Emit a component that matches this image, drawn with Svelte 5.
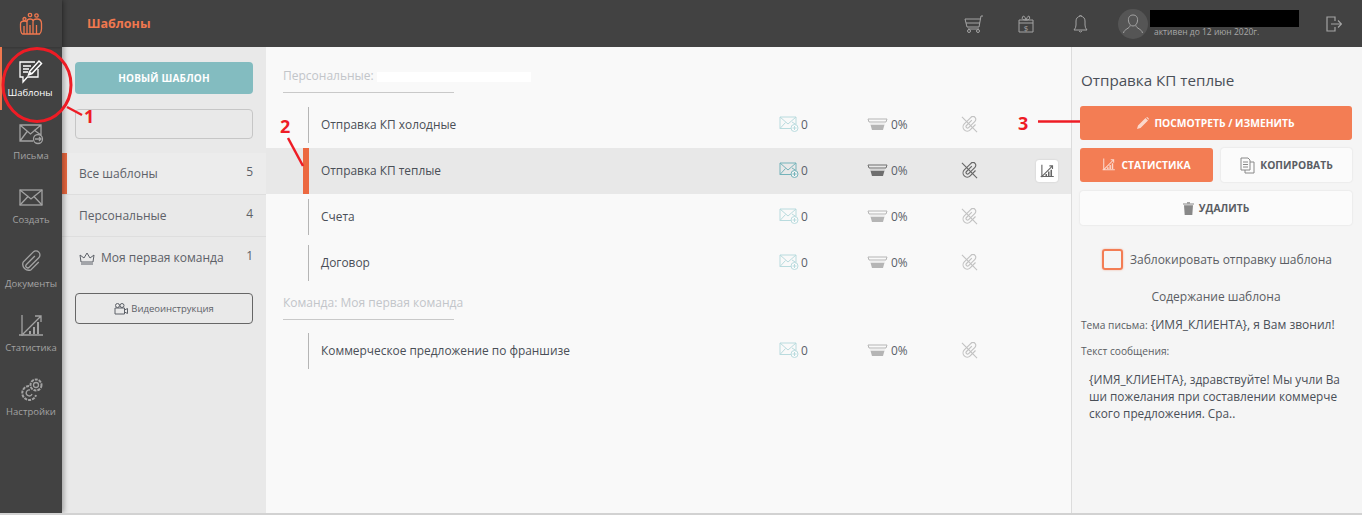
<script>
  const nav = [
    { label: "Шаблоны", icon: "tpl", active: true },
    { label: "Письма", icon: "mail" },
    { label: "Создать", icon: "new" },
    { label: "Документы", icon: "clip" },
    { label: "Статистика", icon: "chart" },
    { label: "Настройки", icon: "gear" },
  ];
  const filters = [
    { label: "Все шаблоны", count: 5, active: true },
    { label: "Персональные", count: 4 },
    { label: "Моя первая команда", count: 1, crown: true },
  ];
  const personal = ["Отправка КП холодные", "Отправка КП теплые", "Счета", "Договор"];
</script>

{#snippet funnel()}
  <svg class="funnel" width="21" height="13" viewBox="0 0 21 13" fill="none">
    <path d="M1 1h19l-1 3H2z" stroke="currentColor" stroke-width="1" />
    <path d="M3 5.500h15l-.5 1.500h-14z" fill="currentColor" fill-opacity=".3" />
    <path d="M3.600 7h13.800l-1.400 5H5z" fill="currentColor" />
  </svg>
{/snippet}

{#snippet mailPlus()}
  <svg class="mailplus" width="20" height="16" viewBox="0 0 20 16" fill="none" stroke="currentColor">
    <path d="M12.500 12.500H1V1h16v7.500M1 1l8 7 8-7M1 12.500l5.500-6M17 8.500l-4-2.500" />
    <circle cx="15.500" cy="12" r="3.500" fill="#fff" fill-opacity=".5" />
    <path d="M13.500 12h4M15.500 10v4" />
  </svg>
{/snippet}

{#snippet link()}
  <svg class="link" width="17" height="17" viewBox="0 0 18 18" fill="none" stroke="currentColor" stroke-width="1.200">
    <path d="M7.500 4.500v8a1.600 1.600 0 0 0 3.200 0V3a3 3 0 0 0-6 0v10a4.400 4.400 0 0 0 8.800 0V5" transform="rotate(45 9 9) translate(0 -.5)" />
    <path d="M1 1l16 16" />
  </svg>
{/snippet}

{#snippet chart(size)}
  <svg width={size} height={size} viewBox="0 0 24 24" fill="none" stroke="currentColor" stroke-width="1.800">
    <path d="M3 1v20M1 20h21M4 19L20 3M15 3h5v5" />
    <path d="M10 19v-3M14 19v-7M18 19V9" stroke-width="2.500" />
  </svg>
{/snippet}

{#snippet row(name, selected)}
  <div class="row" class:selected>
    <div class="row-name"><span class="tick"></span><span class="row-label">{name}</span></div>
    <div class="row-mail">{@render mailPlus()}<span>0</span></div>
    <div class="row-funnel">{@render funnel()}<span>0%</span></div>
    <div class="row-link">{@render link()}</div>
    {#if selected}
      <button class="row-stat">{@render chart(15)}</button>
    {/if}
  </div>
{/snippet}

<div class="app">
  <aside class="rail">
    <div class="logo">
      <svg width="24" height="24" viewBox="0 0 24 24" fill="none" stroke="#f0784f" stroke-width="1.300">
        <circle cx="11" cy="3" r="1.700" />
        <circle cx="17.500" cy="3.500" r="1.700" />
        <circle cx="5.500" cy="7" r="1.500" />
        <path d="M1.500 15v-3q0-3 4-3 2 0 3 1M8 22V10q0-3 3-3t3 2M14 22V10q0-3 4-3 4.500 0 4.500 4.500V17M1.500 15q0 6 2 7h17q2-2 2-5M5 14v8M11 13v9M17.500 13v9" />
      </svg>
    </div>
    {#each nav as item}
      <div class="nav-item" class:active={item.active}>
        <svg width="26" height="26" viewBox="0 0 26 26" fill="none" stroke="currentColor" stroke-width="1.300">
          {#if item.icon === "tpl"}
            <path d="M18 4H3v15h3v5l4.500-5H21v-8" />
            <path d="M6 8h8M6 11h6M6 14h5" />
            <path d="M11.500 17l1-3.500L22 3l2.500 2.500L15 15.500z" stroke-width="1.500" />
            <path d="M13 16l1-2" />
          {:else if item.icon === "mail"}
            <path d="M15 20H2V4h21v10M2 4l10.500 9L23 4M2 20l7.500-10M23 14l-7-5" />
            <circle cx="20" cy="18" r="4.500" />
            <path d="M17 18h6M21 16l2 2-2 2" />
          {:else if item.icon === "new"}
            <rect x="2" y="5" width="22" height="15" />
            <path d="M2 5l11 9 11-9M2 20l8.500-9M24 20l-8.500-9" />
          {:else if item.icon === "clip"}
            <path d="M12.500 6.500v12a2 2 0 0 0 4 0V5a4 4 0 0 0-8 0v14a6 6 0 0 0 11 0V8" transform="rotate(45 13 13) translate(-1 -.5)" />
          {:else if item.icon === "chart"}
            <path d="M4 2v21M1 22h24M5 21L23 3M17 3h6v6" />
            <path d="M12 21v-3M16 21v-7M20 21V9" stroke-width="2" />
          {:else}
            <circle cx="18" cy="8" r="5.500" stroke-dasharray="3 1" stroke-width="2" />
            <circle cx="18" cy="8" r="2.500" />
            <path d="M11 9a7 7 0 1 0 7 9" stroke-dasharray="3 1" stroke-width="2" />
            <path d="M12 13a3 3 0 1 0 2 4" />
          {/if}
        </svg>
        <span>{item.label}</span>
      </div>
    {/each}
  </aside>

  <div class="body">
    <header class="top">
      <div class="title">Шаблоны</div>
      <div class="top-icons">
        <svg width="20" height="18" viewBox="0 0 20 18" fill="none" stroke="currentColor"><path d="M19 1h-2l-2 11H3L1 4h15M2 8h14M4 14h11" /><circle cx="5" cy="16" r="1.500" /><circle cx="14" cy="16" r="1.500" /></svg>
        <svg width="16" height="18" viewBox="0 0 16 18" fill="none" stroke="currentColor"><path d="M1 5h14v12H1zM1 8h14M8 5Q3 5 4.500 2T8 5q4.500 0 3.500-3T8 5" /><text x="8" y="15.500" font-size="8" fill="currentColor" stroke="none" text-anchor="middle">$</text></svg>
        <svg class="bell" width="15" height="20" viewBox="0 0 15 20" fill="none" stroke="currentColor"><path d="M1 16q2-2 2-5V7q0-4 4.500-5Q12 3 12 7v4q0 3 2 5zM6 17q1.500 2 3 0M6.500 2q1-2 2 0" /></svg>
      </div>
      <div class="user">
        <div class="avatar">
          <svg width="20" height="22" viewBox="0 0 20 22" fill="none" stroke="currentColor"><path d="M10 2c3 0 5 2 4.500 6-.5 3-2 5-4.500 5s-4-2-4.500-5C5 4 7 2 10 2zM7 12.500c0 3-6 3.500-6.500 7.500M13 12.500c0 3 6 3.500 6.500 7.500" /></svg>
        </div>
        <div class="user-text">
          <div class="redact"></div>
          <div class="until">активен до 12 июн 2020г.</div>
        </div>
      </div>
      <svg class="logout" width="16" height="16" viewBox="0 0 16 16" fill="none" stroke="currentColor" stroke-width="1.200"><path d="M9 5V1H1v14h8v-4M5 8h10M12 4.500L15.500 8 12 11.500" /></svg>
    </header>

    <div class="columns">
      <section class="filters">
        <div class="filters-top">
          <button class="btn-new">НОВЫЙ ШАБЛОН</button>
          <div class="search"></div>
        </div>
        <div class="filter-list">
          {#each filters as f}
            <div class="filter" class:active={f.active}>
              <span class="filter-name">
                {#if f.crown}
                  <svg width="16" height="14" viewBox="0 0 16 14" fill="none" stroke="currentColor"><path d="M2 11L1 4l4 3 3-5 3 5 4-3-1 7zM2 13h12" /></svg>
                {/if}
                {f.label}
              </span>
              <span class="filter-count">{f.count}</span>
            </div>
          {/each}
        </div>
        <button class="btn-video">
          <svg width="14" height="12" viewBox="0 0 14 12" fill="none" stroke="currentColor"><circle cx="3.500" cy="2.500" r="2" /><circle cx="8" cy="2.500" r="2" /><path d="M1 5h9.500v6H1zM10.500 7l3-1.500v5l-3-1.500" /></svg>
          Видеоинструкция
        </button>
      </section>

      <main class="list">
        <div class="group-head"><span>Персональные:</span><i class="mask"></i></div>
        {#each personal as name, i}
          {@render row(name, i === 1)}
        {/each}
        <div class="group-head second"><span>Команда: Моя первая команда</span></div>
        {@render row("Коммерческое предложение по франшизе", false)}
      </main>

      <section class="detail">
        <h2>Отправка КП теплые</h2>
        <button class="btn wide orange">
          <svg class="soft" width="12" height="12" viewBox="0 0 12 12" fill="currentColor"><path d="M0 12l1-3.500L8.500 1 11 3.500 3.500 11zM9.200.5l1-.5L12 1.800l-.5 1z" /></svg>
          ПОСМОТРЕТЬ / ИЗМЕНИТЬ
        </button>
        <div class="btn-pair">
          <button class="btn orange"><span class="soft">{@render chart(14)}</span> СТАТИСТИКА</button>
          <button class="btn white">
            <svg width="15" height="17" viewBox="0 0 15 17" fill="none" stroke="currentColor"><path d="M1 1h7l2 2v10H1zM10 5h4v11H5v-3M3 5h5M3 7.500h5M3 10h5" /></svg>
            КОПИРОВАТЬ
          </button>
        </div>
        <button class="btn wide white">
          <svg width="11" height="13" viewBox="0 0 11 13" fill="currentColor"><path d="M0 1.500h11v1H0zM4 .3h3v1H4zM1 3.200h9L9.300 13H1.700z" /></svg>
          УДАЛИТЬ
        </button>
        <label class="lock"><span class="box"></span>Заблокировать отправку шаблона</label>
        <div class="content-title">Содержание шаблона</div>
        <p class="subject"><small>Тема письма:</small> {"{ИМЯ_КЛИЕНТА}"}, я Вам звонил!</p>
        <p class="msg-label"><small>Текст сообщения:</small></p>
        <p class="message">{"{ИМЯ_КЛИЕНТА}"}, здравствуйте! Мы учли Ва<br />ши пожелания при составлении коммерче<br />ского предложения. Сра..</p>
      </section>
    </div>
  </div>

  <svg class="marks" width="1362" height="515" viewBox="0 0 1362 515" fill="none" stroke="#ee1c25">
    <ellipse cx="37" cy="85" rx="34" ry="36.500" stroke-width="3" />
    <path d="M67 107l15 8" stroke-width="2.500" />
    <path d="M288 138l15 28" stroke-width="2.500" />
    <path d="M1038 121.500h42" stroke-width="2.500" />
  </svg>
  <span class="num n1">1</span>
  <span class="num n2">2</span>
  <span class="num n3">3</span>
</div>

<style>
  :global(body) {
    margin: 0;
    background: #f9f9f9;
  }
  .app {
    position: relative;
    display: flex;
    width: 1362px;
    height: 515px;
    overflow: hidden;
    font-family: "Open Sans", sans-serif;
    color: #4a4f57;
    box-sizing: border-box;
    border-bottom: 2px solid #d2d2d2;
  }
  button {
    font-family: inherit;
    cursor: pointer;
  }
  .rail {
    width: 62px;
    flex: none;
    background: #424242;
    box-shadow: 2px 0 5px rgba(0, 0, 0, 0.3);
    z-index: 1;
  }
  .logo {
    height: 47px;
    display: flex;
    align-items: center;
    justify-content: center;
    box-shadow: 0 1px 2px rgba(0, 0, 0, 0.2);
  }
  .nav-item {
    height: 64px;
    display: flex;
    flex-direction: column;
    align-items: center;
    padding-top: 11px;
    box-sizing: border-box;
    color: #a3a3a3;
    font-size: 9.500px;
    gap: 2px;
  }
  .nav-item span {
    line-height: 13px;
  }
  .nav-item.active {
    color: #fff;
    border-left: 2px solid #f0784f;
    height: 63px;
    padding-right: 4px;
  }
  .body {
    flex: 1;
    display: flex;
    flex-direction: column;
    min-width: 0;
  }
  .top {
    height: 47px;
    flex: none;
    background: #424242;
    display: flex;
    align-items: center;
    color: #a3a3a3;
  }
  .title {
    margin-left: 25px;
    font-size: 12.500px;
    font-weight: 700;
    color: #f0784f;
  }
  .top-icons {
    margin-left: auto;
    display: flex;
    align-items: center;
    gap: 34px;
  }
  .bell {
    margin-left: 5px;
  }
  .user {
    margin-left: 30px;
    display: flex;
    align-items: center;
    gap: 3px;
    width: 205px;
  }
  .avatar {
    width: 30px;
    height: 30px;
    border-radius: 50%;
    background: #555;
    display: flex;
    align-items: center;
    justify-content: center;
  }
  .user-text {
    display: flex;
    flex-direction: column;
  }
  .redact {
    width: 149px;
    height: 17px;
    background: #000;
    margin-left: -1px;
  }
  .until {
    font-size: 8.500px;
    line-height: 11px;
    color: #a8a8a8;
    margin: -1px 0 0 3px;
  }
  .logout {
    margin-left: 3px;
    margin-right: 20px;
  }
  .columns {
    flex: 1;
    display: flex;
    min-height: 0;
  }
  .filters {
    width: 204px;
    flex: none;
    background: #e9e9e9;
    box-sizing: border-box;
  }
  .filters-top {
    padding: 15px 13px 0;
  }
  .btn-new {
    display: block;
    width: 100%;
    height: 32px;
    background: #83bcc0;
    color: #fff;
    border: 0;
    border-radius: 4px;
    font-size: 10px;
    font-weight: 700;
    letter-spacing: 0.2px;
  }
  .search {
    margin-top: 15px;
    height: 28px;
    border: 1px solid #c6c6c6;
    border-radius: 4px;
  }
  .filter-list {
    margin-top: 14px;
  }
  .filter {
    height: 41px;
    margin-bottom: 1px;
    display: flex;
    align-items: center;
    justify-content: space-between;
    padding: 0 13px 0 17px;
    font-size: 12px;
    color: #5d6168;
    box-shadow: 0 1px 0 #dedede;
  }
  .filter.active {
    background: #ececec;
    box-shadow: inset 5px 0 0 #e8673f, 0 1px 0 #dedede;
  }
  .filter:last-child {
    box-shadow: none;
  }
  .filter-name {
    display: flex;
    align-items: center;
    gap: 6px;
  }
  .filter-count {
    font-size: 12px;
    margin-top: -4px;
  }
  .btn-video {
    display: flex;
    align-items: center;
    justify-content: center;
    gap: 3px;
    margin: 15px 13px 0;
    width: 178px;
    height: 31px;
    background: transparent;
    border: 1px solid #666;
    border-radius: 4px;
    font-size: 9.500px;
    color: #5d6168;
  }
  .list {
    flex: 1;
    background: #f9f9f9;
    min-width: 0;
    padding-top: 21px;
  }
  .group-head {
    margin-left: 17px;
    width: 171px;
    height: 24px;
    border-bottom: 1px solid #c9c9c9;
    font-size: 12px;
    color: #c2c5c9;
    white-space: nowrap;
    position: relative;
    margin-bottom: 9px;
    line-height: 16px;
  }
  .group-head.second {
    margin-top: 9px;
    margin-bottom: 8px;
  }
  .mask {
    display: inline-block;
    width: 154px;
    height: 10px;
    background: #fff;
    vertical-align: -2px;
    margin-left: 3px;
  }
  .row {
    position: relative;
    height: 46px;
    display: flex;
    align-items: center;
    font-size: 11.900px;
    color: #4a4f57;
  }
  .row.selected {
    background: #e8e8e8;
  }
  .row-name {
    width: 513px;
    flex: none;
    display: flex;
    align-items: center;
    align-self: stretch;
    padding-left: 55px;
    box-sizing: border-box;
    position: relative;
  }
  .row-label {
    margin-top: -2px;
  }
  .tick {
    position: absolute;
    left: 42px;
    top: 5px;
    bottom: 5px;
    width: 1px;
    background: #b5b5b5;
  }
  .selected .tick {
    left: 37px;
    top: 0;
    bottom: 0;
    width: 6px;
    background: #ec6840;
  }
  .row-mail {
    width: 88px;
    flex: none;
    display: flex;
    align-items: center;
    gap: 2px;
    color: #b9dbde;
    margin-top: -2px;
  }
  .selected .row-mail {
    color: #75b3ba;
  }
  .row-funnel {
    width: 94px;
    flex: none;
    display: flex;
    align-items: center;
    gap: 3px;
    color: #b5b5b5;
    margin-top: -2px;
  }
  .selected .row-funnel {
    color: #6e6e6e;
  }
  .row-mail span,
  .row-funnel span {
    color: #5a6068;
  }
  .row-link {
    display: flex;
    color: #c2c2c2;
    margin-top: -2px;
  }
  .selected .row-link {
    color: #666;
  }
  .row-stat {
    position: absolute;
    left: 770px;
    top: 12px;
    width: 22px;
    height: 22px;
    padding: 0;
    display: flex;
    align-items: center;
    justify-content: center;
    background: #fff;
    border: 0;
    border-radius: 3px;
    color: #666;
    box-shadow: 0 0 2px rgba(0, 0, 0, 0.15);
  }
  .detail {
    width: 291px;
    flex: none;
    background: #f5f5f5;
    border-left: 1px solid #dcdcdc;
    box-sizing: border-box;
    padding: 0 10px 0 8px;
  }
  h2 {
    margin: 23px 0 16px 1px;
    font-size: 15.200px;
    line-height: 20px;
    font-weight: 400;
    color: #4a4f57;
  }
  .btn {
    display: flex;
    align-items: center;
    justify-content: center;
    gap: 5px;
    height: 34px;
    border: 0;
    border-radius: 3px;
    font-size: 10.300px;
    font-weight: 700;
    padding: 0;
  }
  .wide {
    width: 100%;
  }
  .orange {
    background: #f37d54;
    color: #fff;
  }
  .soft {
    opacity: 0.7;
    display: flex;
  }
  .white {
    background: #fbfbfb;
    color: #5a5d63;
    box-shadow: 0 0 2px rgba(0, 0, 0, 0.12);
  }
  .white svg {
    color: #888;
  }
  .btn-pair {
    display: flex;
    gap: 8px;
    margin: 8px 0 9px;
  }
  .btn-pair .btn {
    flex: none;
    width: 131px;
  }
  .btn-pair .btn.orange {
    width: 133px;
  }
  .lock {
    display: flex;
    align-items: center;
    justify-content: center;
    gap: 7px;
    margin-top: 24px;
    padding-left: 2px;
    font-size: 12px;
    color: #5a5d63;
  }
  .box {
    width: 17px;
    height: 17px;
    border: 2px solid #f37d54;
    border-radius: 3px;
    box-shadow: 0 0 2px rgba(243, 125, 84, 0.6);
  }
  .content-title {
    margin-top: 19px;
    text-align: center;
    font-size: 12px;
    line-height: 16px;
    color: #5a5d63;
  }
  p {
    margin: 0 0 0 1px;
    color: #4a4f57;
  }
  small {
    font-size: 10.200px;
    color: #5a5d63;
  }
  .subject {
    margin-top: 12px;
    font-size: 12px;
    line-height: 16px;
  }
  .msg-label {
    margin-top: 10px;
    line-height: 16px;
    font-size: 11px;
  }
  .message {
    margin-top: 12px;
    padding-left: 8px;
    font-size: 11.800px;
    line-height: 17px;
    white-space: nowrap;
  }
  .marks {
    position: absolute;
    left: 0;
    top: 0;
    z-index: 2;
    pointer-events: none;
  }
  .num {
    position: absolute;
    z-index: 3;
    color: #ee1c25;
    font-weight: 700;
    font-size: 18px;
    line-height: 20px;
  }
  .n1 { left: 84px; top: 106px; }
  .n2 { left: 280px; top: 116px; }
  .n3 { left: 1018px; top: 113px; }
</style>
